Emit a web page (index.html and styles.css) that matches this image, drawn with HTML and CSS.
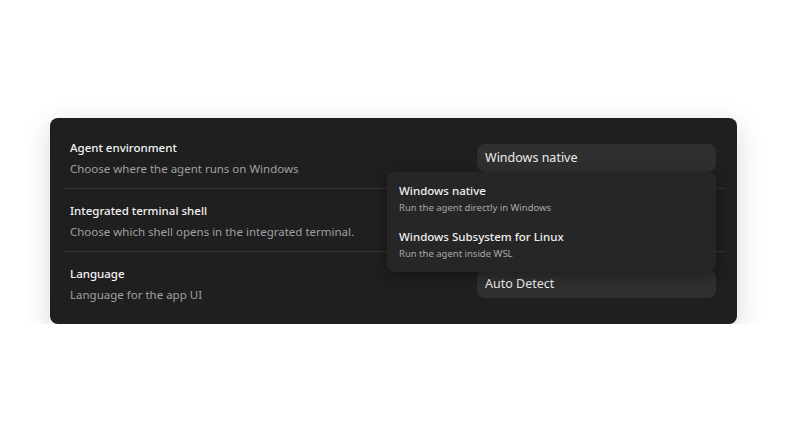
FILE: index.html
```html
<!DOCTYPE html>
<html>
<head>
<meta charset="utf-8">
<link rel="stylesheet" href="styles.css">
</head>
<body>
<div class="card">
  <div class="row">
    <div class="info">
      <div class="title">Agent environment</div>
      <div class="desc">Choose where the agent runs on Windows</div>
    </div>
    <div class="control">
      <div class="select">Windows native</div>
      <div class="menu">
        <div class="item">
          <div class="item-title">Windows native</div>
          <div class="item-desc">Run the agent directly in Windows</div>
        </div>
        <div class="item">
          <div class="item-title">Windows Subsystem for Linux</div>
          <div class="item-desc">Run the agent inside WSL</div>
        </div>
      </div>
    </div>
  </div>
  <div class="row">
    <div class="info">
      <div class="title">Integrated terminal shell</div>
      <div class="desc">Choose which shell opens in the integrated terminal.</div>
    </div>
    <div class="control">
      <div class="select"></div>
    </div>
  </div>
  <div class="row last">
    <div class="info">
      <div class="title">Language</div>
      <div class="desc">Language for the app UI</div>
    </div>
    <div class="control">
      <div class="select">Auto Detect</div>
    </div>
  </div>
</div>
</body>
</html>
```

FILE: styles.css
```css
* { box-sizing: border-box; }
html, body { margin: 0; background: #ffffff; }
body {
  padding: 118px 50px 0 50px;
  font-family: "Noto Sans", "Open Sans", sans-serif;
}
.card {
  width: 687px;
  height: 206px;
  background: #1f1f1f;
  border-radius: 8px;
  padding: 8px 13px;
  box-shadow: 0 8px 28px rgba(0, 0, 0, 0.16);
}
.row {
  height: 63px;
  display: flex;
  align-items: center;
  justify-content: space-between;
  padding: 0 8px 0 7px;
  border-bottom: 1px solid #363636;
}
.row.last { border-bottom: none; }
.info {
  display: flex;
  flex-direction: column;
  gap: 5px;
  padding-top: 2px;
}
.title {
  color: #f2f2f2;
  font-size: 11.5px;
  font-weight: 500;
  line-height: 16px;
}
.desc {
  color: #a0a0a0;
  font-size: 11.5px;
  line-height: 16px;
}
.control { position: relative; padding-top: 1px; }
.select {
  width: 239px;
  height: 28px;
  border-radius: 8px;
  background: #2f2f2f;
  color: #ececec;
  font-size: 12.5px;
  line-height: 28px;
  padding: 0 8px;
}
.menu {
  position: absolute;
  top: 100%;
  right: 0;
  width: 329px;
  background: #262626;
  border-radius: 8px;
  padding: 4px 0;
  box-shadow: 0 4px 14px rgba(0, 0, 0, 0.35);
  z-index: 2;
}
.item {
  height: 46px;
  padding: 7px 12px;
  display: flex;
  flex-direction: column;
  gap: 2px;
}
.item-title {
  color: #f0f0f0;
  font-size: 11.5px;
  font-weight: 500;
  line-height: 16px;
}
.item-desc {
  color: #a8a8a8;
  font-size: 9.5px;
  line-height: 13px;
}
```
